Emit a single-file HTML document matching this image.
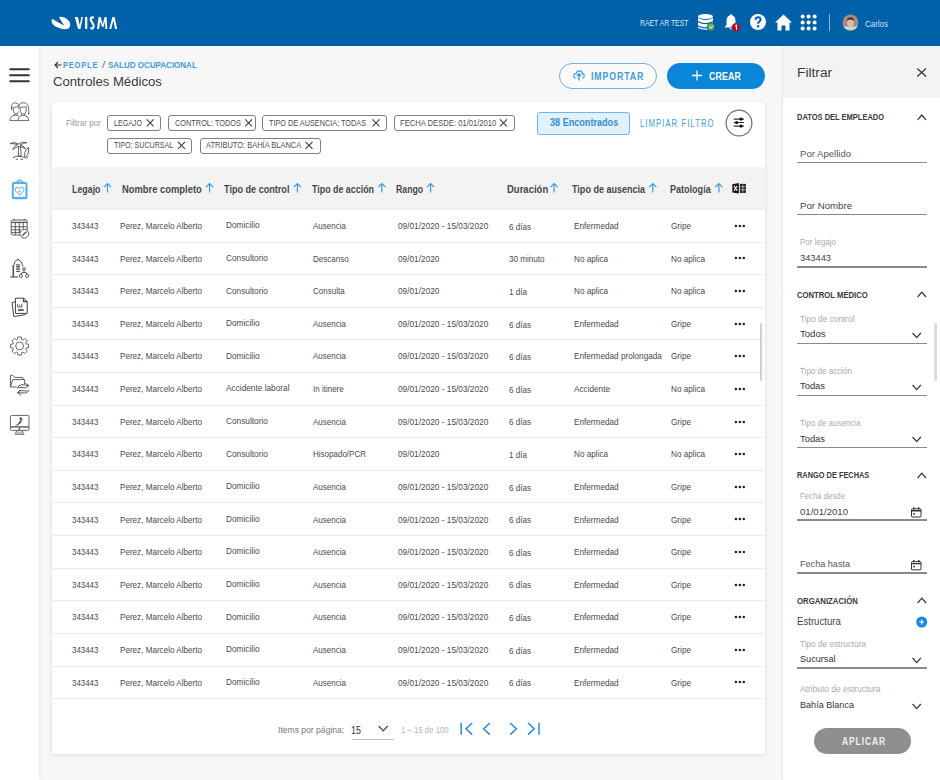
<!DOCTYPE html>
<html><head><meta charset="utf-8">
<style>
*{box-sizing:border-box;margin:0;padding:0}
html,body{width:940px;height:780px;overflow:hidden;background:#f7f7f7;font-family:"Liberation Sans",sans-serif;color:#333}
.abs{position:absolute;display:block}
.t{position:absolute;white-space:nowrap;transform-origin:0 0}
#hdr{position:absolute;left:0;top:0;width:940px;height:45.6px;background:#0061a9}
#side{position:absolute;left:0;top:45px;width:39px;height:735px;background:#fff;box-shadow:1px 0 4px rgba(0,0,0,.07)}
#card{position:absolute;left:52px;top:102px;width:713px;height:652px;background:#fff;border-radius:3px;box-shadow:0 1px 4px rgba(0,0,0,.11)}
#thead{position:absolute;left:52px;top:167px;width:713px;height:42px;background:#f3f3f3}
.rl{position:absolute;left:52px;width:713px;height:1px;background:#ececec}
#panel{position:absolute;left:783px;top:45px;width:157px;height:735px;background:#fff;box-shadow:-1px 0 2px rgba(0,0,0,.08)}
#phead{position:absolute;left:783px;top:45px;width:157px;height:53px;background:#f3f3f3}
.chip{position:absolute;height:16px;border:1px solid #808080;border-radius:3px;background:#fff}
.ul{position:absolute;left:797px;width:130px;height:1.5px;background:#8a8a8a}
</style></head>
<body>
<div id="side"></div>
<div id="card"></div>
<div id="thead"></div>
<div class="rl" style="top:208.88px"></div>
<div class="rl" style="top:241.50px"></div>
<div class="rl" style="top:274.12px"></div>
<div class="rl" style="top:306.74px"></div>
<div class="rl" style="top:339.36px"></div>
<div class="rl" style="top:371.98px"></div>
<div class="rl" style="top:404.60px"></div>
<div class="rl" style="top:437.22px"></div>
<div class="rl" style="top:469.84px"></div>
<div class="rl" style="top:502.46px"></div>
<div class="rl" style="top:535.08px"></div>
<div class="rl" style="top:567.70px"></div>
<div class="rl" style="top:600.32px"></div>
<div class="rl" style="top:632.94px"></div>
<div class="rl" style="top:665.56px"></div>
<div class="rl" style="top:698.18px"></div>
<div id="panel"></div>
<div id="phead"></div>
<div id="hdr"></div>

<!-- VISMA logo -->
<svg class="abs" style="left:48px;top:12px" width="75" height="22" viewBox="0 0 75 22">
  <g fill="#fff">
    <path d="M4.4 7.0 L16.2 13.8 L11.0 5.3 Q12 4.6 14.5 5.0 Q19.5 6.2 21.8 10.5 Q23 14.5 20.5 16.4 Q17.5 17.8 12.5 16.5 Q6.5 14.8 4.2 11.5 Q3.2 9.5 3.8 7.8 Q4 7 4.4 7.0 Z"/>
    <g transform="translate(24 0)">
      <polygon points="2.8,4.9 5.9,4.9 7.7,13.2 9.4,4.9 11,4.9 8.4,16.9 6.1,16.9"/>
      <rect x="13" y="4.9" width="2.3" height="12"/>
      <polygon points="25,16.9 26.6,4.9 28.7,4.9 30.7,12.3 32.7,4.9 34.6,4.9 35.3,16.9 33.3,16.9 33.1,9.2 31.4,15 30,15 28.3,9.2 27.1,16.9"/>
      <polygon points="37.3,16.9 40.4,4.9 42.6,4.9 45.2,16.9 43,16.9 41.4,8.4 39.2,16.9"/>
    </g>
  </g>
  <path transform="translate(24 0)" d="M21.9 5.8 Q18.9 4.6 18.7 7 Q18.6 8.6 20.2 10.6 Q21.9 12.7 21.7 14.5 Q21.4 17.1 18.4 16" stroke="#fff" stroke-width="2.1" fill="none"/>
</svg>

<!-- header icons -->
<svg class="abs" style="left:696px;top:13px" width="20" height="19" viewBox="0 0 20 19">
  <g fill="#fff">
    <ellipse cx="9.5" cy="3.5" rx="7.5" ry="2.5"/>
    <path d="M2 5 Q9.5 9 17 5 L17 8 Q9.5 12 2 8 Z"/>
    <path d="M2 9.2 Q9.5 13.2 17 9.2 L17 12.2 Q9.5 16.2 2 12.2 Z"/>
    <path d="M2 13.4 Q9.5 17.4 17 13.4 L17 15 Q9.5 18.5 2 15 Z"/>
  </g>
  <circle cx="15" cy="13.8" r="3.8" fill="#62b33a" stroke="#0061a9" stroke-width="0.8"/>
  <path d="M13.2 13.9 L14.6 15.2 L16.9 12.6" stroke="#fff" stroke-width="1" fill="none"/>
</svg>
<svg class="abs" style="left:722px;top:13px" width="20" height="19" viewBox="0 0 20 19">
  <path d="M8 2.2 Q8 1.2 9 1.2 Q10 1.2 10 2.2 Q13.5 3.3 13.5 8 L13.5 12 L15.5 14.5 L2.5 14.5 L4.5 12 L4.5 8 Q4.5 3.3 8 2.2 Z" fill="#fff"/>
  <path d="M7.3 15.3 Q9 17.8 10.7 15.3 Z" fill="#fff"/>
  <circle cx="14" cy="14.5" r="4.2" fill="#d0021b" stroke="#0061a9" stroke-width="0.6"/>
  <path d="M13.2 13 L14.5 12.2 L14.5 17" stroke="#fff" stroke-width="1.1" fill="none"/>
</svg>
<svg class="abs" style="left:749px;top:13px" width="18" height="18" viewBox="0 0 18 18">
  <circle cx="9" cy="9" r="8" fill="#fff"/>
  <path d="M6.5 6.8 Q6.5 4.2 9 4.2 Q11.6 4.2 11.6 6.6 Q11.6 8 10 8.9 Q9.1 9.5 9.1 10.8" stroke="#0061a9" stroke-width="2" fill="none"/>
  <circle cx="9.1" cy="13.2" r="1.2" fill="#0061a9"/>
</svg>
<svg class="abs" style="left:774px;top:13px" width="19" height="19" viewBox="0 0 19 19">
  <path d="M9.5 1.5 L18 9.5 L15.5 9.5 L15.5 17.5 L11.5 17.5 L11.5 12.5 L7.5 12.5 L7.5 17.5 L3.5 17.5 L3.5 9.5 L1 9.5 Z" fill="#fff"/>
</svg>
<svg class="abs" style="left:800px;top:14px" width="18" height="18" viewBox="0 0 18 18">
  <g fill="#fff">
    <circle cx="2.6" cy="2.6" r="2"/><circle cx="8.6" cy="2.6" r="2"/><circle cx="14.6" cy="2.6" r="2"/>
    <circle cx="2.6" cy="8.6" r="2"/><circle cx="8.6" cy="8.6" r="2"/><circle cx="14.6" cy="8.6" r="2"/>
    <circle cx="2.6" cy="14.6" r="2"/><circle cx="8.6" cy="14.6" r="2"/><circle cx="14.6" cy="14.6" r="2"/>
  </g>
</svg>
<div class="abs" style="left:829px;top:14px;width:1.2px;height:17px;background:#8fb6d8"></div>
<svg class="abs" style="left:842px;top:14px" width="17" height="17" viewBox="0 0 17 17">
  <defs><clipPath id="av"><circle cx="8.5" cy="8.5" r="8"/></clipPath></defs>
  <circle cx="8.5" cy="8.5" r="8" fill="#a08a86"/>
  <g clip-path="url(#av)">
    <rect x="0" y="12.5" width="17" height="6" fill="#d8d0cc"/>
    <ellipse cx="8.5" cy="8.5" rx="3.4" ry="4.4" fill="#dcb9a8"/>
    <path d="M5 7 Q5 3.2 8.5 3.4 Q12 3.2 12 7 Q10.5 5 8.5 5.5 Q6.5 5 5 7Z" fill="#3a2a25"/>
  </g>
</svg>

<!-- sidebar -->
<svg class="abs" style="left:9px;top:67px" width="21" height="16" viewBox="0 0 21 16">
  <g stroke="#333" stroke-width="2" stroke-linecap="round"><line x1="1.2" y1="2.2" x2="19.8" y2="2.2"/><line x1="1.2" y1="8.2" x2="19.8" y2="8.2"/><line x1="1.2" y1="14.2" x2="19.8" y2="14.2"/></g>
</svg>
<svg class="abs" style="left:6px;top:98px" width="28" height="28" viewBox="0 0 28 28">
  <g stroke="#666" stroke-width="0.95" fill="none" stroke-linejoin="round">
    <path d="M5.6 12 Q4.6 4.8 9 4.7 Q12.6 4.7 12.9 8.5"/>
    <path d="M6.2 10 Q9 8.8 12.4 8.6"/>
    <path d="M7.3 9.8 L7.3 13 Q8 16 10 16 Q11.8 16 12.4 13.5"/>
    <path d="M8.6 16 L8.6 17.4 M11.2 16 L11.2 17.4"/>
    <path d="M3.9 22.6 Q3.9 18.2 8 17.4 L11 17.2 Q12.2 17.5 12.7 18"/>
    <path d="M3.9 22.6 L23 22.6"/>
    <path d="M12.8 11 Q12.4 4.7 17.2 4.7 Q22.3 4.9 22.6 10.5 Q22.6 14 23 15.5"/>
    <path d="M13.5 9.8 Q17.3 8.5 20.7 9"/>
    <path d="M14.1 10 L14.1 13 Q15 16 17.2 16 Q19.5 16 20.2 13 L20.2 9.5"/>
    <path d="M15.5 16 L15.5 17.5 M18.8 16 L18.8 17.5"/>
    <path d="M12 22.6 Q12 18.6 15.3 17.6 L19 17.6 Q22.6 18.6 23 22.6"/>
  </g>
  <circle cx="22.6" cy="15.6" r="0.8" fill="#555"/>
</svg>
<svg class="abs" style="left:6px;top:136px" width="28" height="28" viewBox="0 0 28 28">
  <g stroke="#555" stroke-width="0.95" fill="none" stroke-linejoin="round">
    <path d="M4 7.6 Q8 5.4 12.6 8 Q16.2 5 21 6.6 Q17 7.2 14 9 Q17.2 9.6 19.6 12.6 Q16 11.2 13 10.2 Q10 11.2 6.6 13.6 Q8 10 11.6 8.6 Q8 7.4 4 7.6 Z"/>
    <path d="M12.6 10.2 Q12 15 12.6 20.3 L15 20.3 Q15.2 15 14.2 10.2"/>
    <path d="M22.5 11.5 Q19 13.2 18.6 19 Q18.6 21 19.6 21.6 Q22.6 19 22.8 14 Z"/>
    <path d="M7 21.8 Q10 19.6 13 20.2 Q16.5 20.6 19 21.6"/>
    <path d="M9.8 23.2 L12 23.2 M14.4 23 L17 23.6"/>
    <path d="M21.8 20.6 L20.8 22.6"/>
  </g>
</svg>
<svg class="abs" style="left:6px;top:176px" width="28" height="28" viewBox="0 0 28 28">
  <g stroke="#55aee9" fill="none" stroke-linejoin="round">
    <rect x="6.8" y="7.1" width="13.7" height="15.2" rx="1" stroke-width="2"/>
    <path d="M8.8 8 L8.8 6.6 Q10.2 6 11.6 5.6 Q12.4 4 13.6 4 Q14.8 4 15.6 5.6 Q17 6 18.4 6.6 L18.4 8" stroke-width="1.3"/>
    <path d="M6.8 21.3 L20.5 21.3" stroke-width="1"/>
    <path d="M13.6 19.2 L9.8 15.2 Q8.6 13.3 9.6 11.9 Q11.4 10.2 13.6 12.4 Q15.8 10.2 17.6 11.9 Q18.6 13.3 17.4 15.2 Z" stroke-width="1"/>
  </g>
  <circle cx="13.5" cy="15.4" r="1" fill="#55aee9"/>
</svg>
<svg class="abs" style="left:6px;top:214px" width="28" height="28" viewBox="0 0 28 28">
  <g stroke="#555" stroke-width="0.95" fill="none">
    <rect x="5.2" y="6" width="16" height="15" rx="1.3"/>
    <path d="M5.2 8.4 L21.2 8.4" stroke-width="1.3"/>
    <path d="M5.2 12.8 L21.2 12.8 M5.2 15.8 L15 15.8 M5.2 18.6 L13.5 18.6 M9.3 8.4 L9.3 21 M13.3 8.4 L13.3 19 M17.2 8.4 L17.2 15"/>
    <path d="M8.3 4.8 L8.3 6.5 M18.3 4.8 L18.3 6.5"/>
    <circle cx="18.3" cy="19.7" r="4.4" fill="#fff"/>
    <path d="M16.3 21.7 L20.3 17.7" stroke-width="1.5"/>
  </g>
</svg>
<svg class="abs" style="left:6px;top:254px" width="28" height="28" viewBox="0 0 28 28">
  <g stroke="#555" stroke-width="1" fill="none">
    <path d="M8.2 11 Q8 6.8 12 5.6 Q16 6.8 16.6 11.5"/>
    <path d="M12 5.6 L12 4.8" stroke-width="1.6"/>
    <path d="M7.3 11 L7.3 22.8" stroke-width="1.6"/>
    <path d="M4.4 23 L12 23" stroke-width="1.2"/>
    <path d="M10.2 10.7 L13.9 10.7 M10.2 12.4 L13.9 12.4 M10.2 14.1 L13.9 14.1 M10.2 15.8 L13.9 15.8 M10.2 17.5 L13.9 17.5" stroke-width="1.1"/>
    <path d="M16.6 11.5 L16.6 12.5" stroke-width="1.5"/>
    <circle cx="18" cy="15" r="1.3"/>
    <path d="M18 16.3 L18 18 M15 20.5 L16 18.6 L20.2 18.6 L21 20.5"/>
    <circle cx="14.8" cy="21.8" r="1.6"/><circle cx="21.2" cy="21.8" r="1.6"/>
  </g>
</svg>
<svg class="abs" style="left:6px;top:293px" width="28" height="28" viewBox="0 0 28 28">
  <g stroke="#444" stroke-width="1" fill="none" stroke-linejoin="round">
    <path d="M9 8.8 L6 9.6 L7.8 23.6 L19.6 21.6"/>
    <path d="M9.4 5.2 L17.6 5.2 L21.2 8.6 L21.2 20.4 L9.4 20.4 Z"/>
    <path d="M17.6 5.2 L17.6 8.6 L21.2 8.6" stroke-width="1.4"/>
  </g>
  <path d="M11.6 10.8 L11.6 14 L16.6 14 M13.8 11.6 L13.8 13.4 M15.8 10.8 L15.8 13.4" stroke="#555" stroke-width="0.9" fill="none"/>
  <path d="M12 16.2 L17.4 16.2 L18 17.8 L12 17.8 Z" fill="#333"/>
</svg>
<svg class="abs" style="left:6px;top:332px" width="28" height="28" viewBox="0 0 28 28">
  <path d="M11.58 7.40 L11.84 4.97 L15.36 4.97 L15.62 7.40 L16.84 7.91 L18.74 6.37 L21.23 8.86 L19.69 10.76 L20.20 11.98 L22.63 12.24 L22.63 15.76 L20.20 16.02 L19.69 17.24 L21.23 19.14 L18.74 21.63 L16.84 20.09 L15.62 20.60 L15.36 23.03 L11.84 23.03 L11.58 20.60 L10.36 20.09 L8.46 21.63 L5.97 19.14 L7.51 17.24 L7.00 16.02 L4.57 15.76 L4.57 12.24 L7.00 11.98 L7.51 10.76 L5.97 8.86 L8.46 6.37 L10.36 7.91 Z" stroke="#666" stroke-width="1" fill="none" stroke-linejoin="round"/>
  <circle cx="13.6" cy="14" r="3.9" stroke="#666" stroke-width="1" fill="none"/>
</svg>
<svg class="abs" style="left:6px;top:371px" width="28" height="28" viewBox="0 0 28 28">
  <g stroke="#555" stroke-width="0.95" fill="none" stroke-linejoin="round">
    <path d="M4.4 16 L4.4 5 Q4.4 4.3 5.2 4.3 L6.8 4.3 L8.6 6.4 L16.4 6.4 L17.6 8.6"/>
    <path d="M4.4 16 L6.8 8.6 L18.6 8.6 L18.6 13.2"/>
    <path d="M4.4 16 L10.8 16"/>
    <path d="M11.4 17.8 Q12 13.8 16 13.6 L22.8 14.6 M19.4 12.4 L23 14.6 L19.6 17"/>
    <path d="M22.6 18.6 Q22.6 21.8 18.4 22 L11.4 21.6 M14.8 19.4 L11.4 21.6 L15.2 24"/>
    <path d="M12.4 16.4 L19.6 16.8 M13.2 19.6 L21.4 20"/>
  </g>
</svg>
<svg class="abs" style="left:6px;top:410px" width="28" height="28" viewBox="0 0 28 28">
  <g stroke="#666" stroke-width="1" fill="none" stroke-linejoin="round">
    <rect x="4.4" y="5.4" width="18.6" height="15" rx="1.2"/>
    <path d="M4.4 16.9 L23 16.9" stroke-width="1.5"/>
    <path d="M13.4 17.5 L13.4 20.4" stroke-width="1.4"/>
    <path d="M11 20.6 L9.4 24.2 L17.8 24.2 L16 20.6" stroke-width="1.2"/>
  </g>
  <path d="M9.3 15.4 Q12 14.5 13.6 11.6 Q14.6 9.8 14.2 9 L12.6 9.4 L14.6 7 L17.4 9.4 L15.6 9.4 Q16 11.6 14.4 13.6 Q12.6 15.6 9.6 16 Z" fill="#555"/>
  <path d="M9.4 24 L17.8 24 L16.6 21.6 L10.6 21.6 Z" fill="#bbb"/>
</svg>

<!-- breadcrumb arrow -->
<svg class="abs" style="left:54px;top:61px" width="8" height="8" viewBox="0 0 8 8">
  <path d="M7.5 4 L1 4 M4 1 L1 4 L4 7" stroke="#333" stroke-width="1.1" fill="none"/>
</svg>

<!-- buttons -->
<div class="abs" style="left:559px;top:62.5px;width:98px;height:26px;border:1px solid #6ab4ea;border-radius:13px;background:#fafafa"></div>
<svg class="abs" style="left:573px;top:70px" width="12" height="11" viewBox="0 0 12 11">
  <path d="M3.5 8 Q0.5 8 0.8 5.2 Q1.2 3.2 3.2 3.3 Q4 0.6 6.5 0.8 Q9.3 1 9.4 3.6 Q11.5 3.8 11.2 6.2 Q11 8 9 8" stroke="#3d9be0" stroke-width="1.2" fill="none"/>
  <path d="M6 10.5 L6 4 M3.8 6 L6 3.8 L8.2 6" stroke="#3d9be0" stroke-width="1.4" fill="none"/>
</svg>
<div class="abs" style="left:667px;top:62.5px;width:98px;height:26px;border-radius:13px;background:#0a86d8"></div>
<svg class="abs" style="left:691px;top:69.5px" width="12" height="11" viewBox="0 0 12 11">
  <path d="M6 0.5 L6 10.5 M1 5.5 L11 5.5" stroke="#fff" stroke-width="1.3"/>
</svg>

<!-- encontrados / filter -->
<div class="abs" style="left:537px;top:111.5px;width:93px;height:23px;border:1px solid #6cb8ee;border-radius:3px;background:#e1f2fd"></div>
<svg class="abs" style="left:725px;top:109px" width="28" height="28" viewBox="0 0 28 28">
  <circle cx="14" cy="14" r="12.9" stroke="#707070" stroke-width="1.2" fill="#fff"/>
  <g stroke="#333" stroke-width="1.1"><path d="M8.7 10.1 L19 10.1 M8.7 13.5 L19 13.5 M8.7 17.1 L19 17.1"/></g>
  <g fill="#111"><circle cx="16" cy="10.1" r="1.6"/><circle cx="11.6" cy="13.5" r="1.6"/><circle cx="16" cy="17.1" r="1.6"/></g>
</svg>

<!-- chips -->
<div class="chip" style="left:107px;top:115px;width:54px"></div>
<div class="chip" style="left:168px;top:115px;width:88px"></div>
<div class="chip" style="left:262px;top:115px;width:125px"></div>
<div class="chip" style="left:394px;top:115px;width:121px"></div>
<div class="chip" style="left:107px;top:138px;width:85px"></div>
<div class="chip" style="left:200px;top:138px;width:121px"></div>
<svg class="abs" style="left:0;top:0" width="940" height="160" viewBox="0 0 940 160">
  <g stroke="#3a3a3a" stroke-width="1.05" fill="none">
    <path d="M146.8 119.3 L153.6 126.4 M153.6 119.3 L146.8 126.4"/>
    <path d="M245.2 119.3 L252 126.4 M252 119.3 L245.2 126.4"/>
    <path d="M372.5 119.3 L379.5 126.4 M379.5 119.3 L372.5 126.4"/>
    <path d="M500 119.3 L507 126.4 M507 119.3 L500 126.4"/>
    <path d="M178 141.8 L185 148.8 M185 141.8 L178 148.8"/>
    <path d="M305.5 141.8 L312.5 148.8 M312.5 141.8 L305.5 148.8"/>
  </g>
</svg>

<!-- sort arrows -->
<svg class="abs" style="left:0;top:170px" width="760" height="30" viewBox="0 170 760 30">
  <g stroke="#3d9be0" stroke-width="1.2" fill="none">
    <path d="M107.5 192.6 L107.5 183.6 M103.9 187.2 L107.5 183.6 L111.1 187.2"/>
    <path d="M209.6 192.6 L209.6 183.6 M206.0 187.2 L209.6 183.6 L213.2 187.2"/>
    <path d="M297.4 192.6 L297.4 183.6 M293.8 187.2 L297.4 183.6 L301.0 187.2"/>
    <path d="M381.8 192.6 L381.8 183.6 M378.2 187.2 L381.8 183.6 L385.4 187.2"/>
    <path d="M430.6 192.6 L430.6 183.6 M427.0 187.2 L430.6 183.6 L434.2 187.2"/>
    <path d="M554.1 192.6 L554.1 183.6 M550.5 187.2 L554.1 183.6 L557.7 187.2"/>
    <path d="M652.8 192.6 L652.8 183.6 M649.2 187.2 L652.8 183.6 L656.4 187.2"/>
    <path d="M718.9 192.6 L718.9 183.6 M715.3 187.2 L718.9 183.6 L722.5 187.2"/>
  </g>
  <g>
    <path d="M732.3 184.2 L738.9 182.9 L738.9 193.6 L732.3 192.6 Z" fill="#1a1a1a"/>
    <path d="M734 186 L737.2 190.6 M737.2 186 L734 190.6" stroke="#fff" stroke-width="1.1"/>
    <rect x="739.9" y="183.9" width="5.9" height="9" fill="#1a1a1a"/>
    <path d="M742.85 184.5 L742.85 192.3 M740.3 186.8 L745.4 186.8 M740.3 189.8 L745.4 189.8" stroke="#eee" stroke-width="0.7"/>
  </g>
</svg>
<svg class="abs" style="left:734px;top:223.79px" width="12" height="4" viewBox="0 0 12 4"><circle cx="1.9" cy="2" r="1.3" fill="#222"/><circle cx="5.85" cy="2" r="1.3" fill="#222"/><circle cx="9.8" cy="2" r="1.3" fill="#222"/></svg>
<svg class="abs" style="left:734px;top:256.41px" width="12" height="4" viewBox="0 0 12 4"><circle cx="1.9" cy="2" r="1.3" fill="#222"/><circle cx="5.85" cy="2" r="1.3" fill="#222"/><circle cx="9.8" cy="2" r="1.3" fill="#222"/></svg>
<svg class="abs" style="left:734px;top:289.03px" width="12" height="4" viewBox="0 0 12 4"><circle cx="1.9" cy="2" r="1.3" fill="#222"/><circle cx="5.85" cy="2" r="1.3" fill="#222"/><circle cx="9.8" cy="2" r="1.3" fill="#222"/></svg>
<svg class="abs" style="left:734px;top:321.65px" width="12" height="4" viewBox="0 0 12 4"><circle cx="1.9" cy="2" r="1.3" fill="#222"/><circle cx="5.85" cy="2" r="1.3" fill="#222"/><circle cx="9.8" cy="2" r="1.3" fill="#222"/></svg>
<svg class="abs" style="left:734px;top:354.27px" width="12" height="4" viewBox="0 0 12 4"><circle cx="1.9" cy="2" r="1.3" fill="#222"/><circle cx="5.85" cy="2" r="1.3" fill="#222"/><circle cx="9.8" cy="2" r="1.3" fill="#222"/></svg>
<svg class="abs" style="left:734px;top:386.89px" width="12" height="4" viewBox="0 0 12 4"><circle cx="1.9" cy="2" r="1.3" fill="#222"/><circle cx="5.85" cy="2" r="1.3" fill="#222"/><circle cx="9.8" cy="2" r="1.3" fill="#222"/></svg>
<svg class="abs" style="left:734px;top:419.51px" width="12" height="4" viewBox="0 0 12 4"><circle cx="1.9" cy="2" r="1.3" fill="#222"/><circle cx="5.85" cy="2" r="1.3" fill="#222"/><circle cx="9.8" cy="2" r="1.3" fill="#222"/></svg>
<svg class="abs" style="left:734px;top:452.13px" width="12" height="4" viewBox="0 0 12 4"><circle cx="1.9" cy="2" r="1.3" fill="#222"/><circle cx="5.85" cy="2" r="1.3" fill="#222"/><circle cx="9.8" cy="2" r="1.3" fill="#222"/></svg>
<svg class="abs" style="left:734px;top:484.75px" width="12" height="4" viewBox="0 0 12 4"><circle cx="1.9" cy="2" r="1.3" fill="#222"/><circle cx="5.85" cy="2" r="1.3" fill="#222"/><circle cx="9.8" cy="2" r="1.3" fill="#222"/></svg>
<svg class="abs" style="left:734px;top:517.37px" width="12" height="4" viewBox="0 0 12 4"><circle cx="1.9" cy="2" r="1.3" fill="#222"/><circle cx="5.85" cy="2" r="1.3" fill="#222"/><circle cx="9.8" cy="2" r="1.3" fill="#222"/></svg>
<svg class="abs" style="left:734px;top:549.99px" width="12" height="4" viewBox="0 0 12 4"><circle cx="1.9" cy="2" r="1.3" fill="#222"/><circle cx="5.85" cy="2" r="1.3" fill="#222"/><circle cx="9.8" cy="2" r="1.3" fill="#222"/></svg>
<svg class="abs" style="left:734px;top:582.61px" width="12" height="4" viewBox="0 0 12 4"><circle cx="1.9" cy="2" r="1.3" fill="#222"/><circle cx="5.85" cy="2" r="1.3" fill="#222"/><circle cx="9.8" cy="2" r="1.3" fill="#222"/></svg>
<svg class="abs" style="left:734px;top:615.23px" width="12" height="4" viewBox="0 0 12 4"><circle cx="1.9" cy="2" r="1.3" fill="#222"/><circle cx="5.85" cy="2" r="1.3" fill="#222"/><circle cx="9.8" cy="2" r="1.3" fill="#222"/></svg>
<svg class="abs" style="left:734px;top:647.85px" width="12" height="4" viewBox="0 0 12 4"><circle cx="1.9" cy="2" r="1.3" fill="#222"/><circle cx="5.85" cy="2" r="1.3" fill="#222"/><circle cx="9.8" cy="2" r="1.3" fill="#222"/></svg>
<svg class="abs" style="left:734px;top:680.47px" width="12" height="4" viewBox="0 0 12 4"><circle cx="1.9" cy="2" r="1.3" fill="#222"/><circle cx="5.85" cy="2" r="1.3" fill="#222"/><circle cx="9.8" cy="2" r="1.3" fill="#222"/></svg>

<!-- table scrollbar -->
<div class="abs" style="left:760.3px;top:323px;width:2px;height:58px;background:#d0d0d0;border-radius:1px"></div>

<!-- pagination -->
<div class="abs" style="left:352px;top:739px;width:41.5px;height:1px;background:#bdbdbd"></div>
<svg class="abs" style="left:0;top:715px" width="560" height="30" viewBox="0 715 560 30">
  <path d="M378.7 726 L383.2 730.8 L387.7 726" stroke="#444" stroke-width="1.2" fill="none"/>
  <g stroke="#2a8ad6" stroke-width="1.5" fill="none">
    <path d="M461.2 722.8 L461.2 734.8 M472.2 723 L466 728.8 L472.2 734.6"/>
    <path d="M489.8 723 L483.6 728.8 L489.8 734.6"/>
    <path d="M510.2 723 L516.4 728.8 L510.2 734.6"/>
    <path d="M528 723 L534.2 728.8 L528 734.6 M539 722.8 L539 734.8"/>
  </g>
</svg>

<!-- right panel icons -->
<svg class="abs" style="left:0;top:0" width="940" height="780" viewBox="0 0 940 780" style="pointer-events:none">
  <g stroke="#333" stroke-width="1.2" fill="none">
    <path d="M917.3 68.5 L926.1 76.5 M926.1 68.5 L917.3 76.5"/>
    <path d="M917.6 119.8 L921.8 115 L926 119.8"/>
    <path d="M917.6 297 L921.8 292.2 L926 297"/>
    <path d="M917.6 478 L921.8 473.2 L926 478"/>
    <path d="M917.6 603 L921.8 598.2 L926 603"/>
    <path d="M912.6 333 L916.7 337.6 L920.8 333"/>
    <path d="M912.6 385 L916.7 389.6 L920.8 385"/>
    <path d="M912.6 437 L916.7 441.6 L920.8 437"/>
    <path d="M912.6 658 L916.7 662.6 L920.8 658"/>
    <path d="M912.6 704 L916.7 708.6 L920.8 704"/>
  </g>
  <g stroke="#333" stroke-width="1" fill="none">
    <rect x="911.5" y="508.8" width="9.5" height="8.2" rx="0.8"/>
    <path d="M911.5 510.8 L921 510.8 M913.8 507.2 L913.8 509.5 M918.7 507.2 L918.7 509.5" stroke-width="1.4"/>
    <rect x="911.5" y="561.6" width="9.5" height="8.2" rx="0.8"/>
    <path d="M911.5 563.6 L921 563.6 M913.8 560 L913.8 562.3 M918.7 560 L918.7 562.3" stroke-width="1.4"/>
  </g>
  <rect x="913.3" y="513" width="1.6" height="1.6" fill="#333"/>
  <rect x="913.3" y="565.8" width="1.6" height="1.6" fill="#333"/>
  <circle cx="921.7" cy="622" r="5.5" fill="#1a8ae0"/>
  <path d="M921.7 619.6 L921.7 624.4 M919.3 622 L924.1 622" stroke="#fff" stroke-width="1.2"/>
</svg>
<div class="ul" style="top:161.6px"></div>
<div class="ul" style="top:213.9px"></div>
<div class="ul" style="top:266.3px"></div>
<div class="ul" style="top:342.6px"></div>
<div class="ul" style="top:394.7px"></div>
<div class="ul" style="top:446.6px"></div>
<div class="ul" style="top:519px"></div>
<div class="ul" style="top:572.4px"></div>
<div class="ul" style="top:667.4px"></div>
<div class="abs" style="left:934px;top:323.4px;width:2.5px;height:58px;background:#dcdcdc;border-radius:1px"></div>
<div class="abs" style="left:813.7px;top:728.2px;width:97.7px;height:25.5px;border-radius:13px;background:#8f8f8f"></div>

<div class="t" style="left:639.5px;top:18.95px;font-size:9.16px;line-height:9.16px;font-weight:400;color:#dbe7f2;transform:scaleX(0.747)">RAET AR TEST</div>
<div class="t" style="left:865.0px;top:18.86px;font-size:9.74px;line-height:9.74px;font-weight:400;color:#d2e2f0;transform:scaleX(0.814)">Carlos</div>
<div class="t" style="left:63.3px;top:60.92px;font-size:8.72px;line-height:8.72px;font-weight:700;color:#3d9be0;letter-spacing:1.02px;transform:scaleX(0.850)">PEOPLE</div>
<div class="t" style="left:101.6px;top:60.92px;font-size:8.72px;line-height:8.72px;font-weight:400;color:#777;transform:scaleX(1.395)">/</div>
<div class="t" style="left:107.9px;top:60.92px;font-size:8.72px;line-height:8.72px;font-weight:700;color:#3d9be0;transform:scaleX(0.918)">SALUD OCUPACIONAL</div>
<div class="t" style="left:52.6px;top:75.18px;font-size:13.37px;line-height:13.37px;font-weight:400;color:#3a3a3a;transform:scaleX(0.984)">Controles Médicos</div>
<div class="t" style="left:591.1px;top:71.61px;font-size:10.03px;line-height:10.03px;font-weight:700;color:#3d9be0;letter-spacing:0.98px;transform:scaleX(0.880)">IMPORTAR</div>
<div class="t" style="left:709.2px;top:71.61px;font-size:10.03px;line-height:10.03px;font-weight:700;color:#ffffff;letter-spacing:0.13px;transform:scaleX(0.880)">CREAR</div>
<div class="t" style="left:549.9px;top:118.09px;font-size:10.17px;line-height:10.17px;font-weight:700;color:#2f8fd6;transform:scaleX(0.895)">38 Encontrados</div>
<div class="t" style="left:639.8px;top:118.85px;font-size:10.1px;line-height:10.1px;font-weight:400;color:#3d9be0;letter-spacing:1.41px;transform:scaleX(0.760)">LIMPIAR FILTRO</div>
<div class="t" style="left:65.7px;top:118.96px;font-size:8.43px;line-height:8.43px;font-weight:400;color:#9a9a9a;transform:scaleX(0.974)">Filtrar por</div>
<div class="t" style="left:114.2px;top:118.95px;font-size:9.16px;line-height:9.16px;font-weight:400;color:#4e4e4e;transform:scaleX(0.772)">LEGAJO</div>
<div class="t" style="left:174.5px;top:118.95px;font-size:9.16px;line-height:9.16px;font-weight:400;color:#4e4e4e;transform:scaleX(0.803)">CONTROL: TODOS</div>
<div class="t" style="left:269.4px;top:118.95px;font-size:9.16px;line-height:9.16px;font-weight:400;color:#4e4e4e;transform:scaleX(0.797)">TIPO DE AUSENCIA: TODAS</div>
<div class="t" style="left:400.1px;top:118.95px;font-size:9.16px;line-height:9.16px;font-weight:400;color:#4e4e4e;transform:scaleX(0.834)">FECHA DESDE: 01/01/2010</div>
<div class="t" style="left:114.2px;top:141.35px;font-size:9.16px;line-height:9.16px;font-weight:400;color:#4e4e4e;transform:scaleX(0.776)">TIPO: SUCURSAL</div>
<div class="t" style="left:205.8px;top:141.35px;font-size:9.16px;line-height:9.16px;font-weight:400;color:#4e4e4e;transform:scaleX(0.816)">ATRIBUTO: BAHÍA BLANCA</div>
<div class="t" style="left:72.0px;top:184.69px;font-size:10.17px;line-height:10.17px;font-weight:700;color:#484848;transform:scaleX(0.871)">Legajo</div>
<div class="t" style="left:122.3px;top:184.69px;font-size:10.17px;line-height:10.17px;font-weight:700;color:#484848;transform:scaleX(0.924)">Nombre completo</div>
<div class="t" style="left:224.0px;top:184.69px;font-size:10.17px;line-height:10.17px;font-weight:700;color:#484848;transform:scaleX(0.894)">Tipo de control</div>
<div class="t" style="left:311.8px;top:184.69px;font-size:10.17px;line-height:10.17px;font-weight:700;color:#484848;transform:scaleX(0.874)">Tipo de acción</div>
<div class="t" style="left:395.9px;top:184.69px;font-size:10.17px;line-height:10.17px;font-weight:700;color:#484848;transform:scaleX(0.857)">Rango</div>
<div class="t" style="left:506.8px;top:184.69px;font-size:10.17px;line-height:10.17px;font-weight:700;color:#484848;transform:scaleX(0.936)">Duración</div>
<div class="t" style="left:571.9px;top:184.69px;font-size:10.17px;line-height:10.17px;font-weight:700;color:#484848;transform:scaleX(0.889)">Tipo de ausencia</div>
<div class="t" style="left:670.3px;top:184.69px;font-size:10.17px;line-height:10.17px;font-weight:700;color:#484848;transform:scaleX(0.890)">Patología</div>
<div class="t" style="left:72.0px;top:221.96px;font-size:9.01px;line-height:9.01px;font-weight:400;color:#4a4a4a;transform:scaleX(0.880)">343443</div>
<div class="t" style="left:119.7px;top:221.96px;font-size:9.01px;line-height:9.01px;font-weight:400;color:#4a4a4a;transform:scaleX(0.900)">Perez, Marcelo Alberto</div>
<div class="t" style="left:225.5px;top:221.26px;font-size:9.01px;line-height:9.01px;font-weight:400;color:#4a4a4a;transform:scaleX(0.920)">Domicilio</div>
<div class="t" style="left:312.6px;top:221.96px;font-size:9.01px;line-height:9.01px;font-weight:400;color:#4a4a4a;transform:scaleX(0.890)">Ausencia</div>
<div class="t" style="left:397.7px;top:221.96px;font-size:9.01px;line-height:9.01px;font-weight:400;color:#4a4a4a;transform:scaleX(0.920)">09/01/2020 - 15/03/2020</div>
<div class="t" style="left:508.6px;top:222.66px;font-size:9.01px;line-height:9.01px;font-weight:400;color:#4a4a4a;transform:scaleX(0.900)">6 días</div>
<div class="t" style="left:574.0px;top:221.96px;font-size:9.01px;line-height:9.01px;font-weight:400;color:#4a4a4a;transform:scaleX(0.910)">Enfermedad</div>
<div class="t" style="left:671.0px;top:221.96px;font-size:9.01px;line-height:9.01px;font-weight:400;color:#4a4a4a;transform:scaleX(0.910)">Gripe</div>
<div class="t" style="left:72.0px;top:254.58px;font-size:9.01px;line-height:9.01px;font-weight:400;color:#4a4a4a;transform:scaleX(0.880)">343443</div>
<div class="t" style="left:119.7px;top:254.58px;font-size:9.01px;line-height:9.01px;font-weight:400;color:#4a4a4a;transform:scaleX(0.900)">Perez, Marcelo Alberto</div>
<div class="t" style="left:225.5px;top:253.88px;font-size:9.01px;line-height:9.01px;font-weight:400;color:#4a4a4a;transform:scaleX(0.920)">Consultorio</div>
<div class="t" style="left:312.6px;top:254.58px;font-size:9.01px;line-height:9.01px;font-weight:400;color:#4a4a4a;transform:scaleX(0.890)">Descanso</div>
<div class="t" style="left:397.7px;top:254.58px;font-size:9.01px;line-height:9.01px;font-weight:400;color:#4a4a4a;transform:scaleX(0.920)">09/01/2020</div>
<div class="t" style="left:508.6px;top:255.28px;font-size:9.01px;line-height:9.01px;font-weight:400;color:#4a4a4a;transform:scaleX(0.900)">30 minuto</div>
<div class="t" style="left:574.0px;top:254.58px;font-size:9.01px;line-height:9.01px;font-weight:400;color:#4a4a4a;transform:scaleX(0.910)">No aplica</div>
<div class="t" style="left:671.0px;top:254.58px;font-size:9.01px;line-height:9.01px;font-weight:400;color:#4a4a4a;transform:scaleX(0.910)">No aplica</div>
<div class="t" style="left:72.0px;top:287.20px;font-size:9.01px;line-height:9.01px;font-weight:400;color:#4a4a4a;transform:scaleX(0.880)">343443</div>
<div class="t" style="left:119.7px;top:287.20px;font-size:9.01px;line-height:9.01px;font-weight:400;color:#4a4a4a;transform:scaleX(0.900)">Perez, Marcelo Alberto</div>
<div class="t" style="left:225.5px;top:286.50px;font-size:9.01px;line-height:9.01px;font-weight:400;color:#4a4a4a;transform:scaleX(0.920)">Consultorio</div>
<div class="t" style="left:312.6px;top:287.20px;font-size:9.01px;line-height:9.01px;font-weight:400;color:#4a4a4a;transform:scaleX(0.890)">Consulta</div>
<div class="t" style="left:397.7px;top:287.20px;font-size:9.01px;line-height:9.01px;font-weight:400;color:#4a4a4a;transform:scaleX(0.920)">09/01/2020</div>
<div class="t" style="left:508.6px;top:287.90px;font-size:9.01px;line-height:9.01px;font-weight:400;color:#4a4a4a;transform:scaleX(0.900)">1 día</div>
<div class="t" style="left:574.0px;top:287.20px;font-size:9.01px;line-height:9.01px;font-weight:400;color:#4a4a4a;transform:scaleX(0.910)">No aplica</div>
<div class="t" style="left:671.0px;top:287.20px;font-size:9.01px;line-height:9.01px;font-weight:400;color:#4a4a4a;transform:scaleX(0.910)">No aplica</div>
<div class="t" style="left:72.0px;top:319.82px;font-size:9.01px;line-height:9.01px;font-weight:400;color:#4a4a4a;transform:scaleX(0.880)">343443</div>
<div class="t" style="left:119.7px;top:319.82px;font-size:9.01px;line-height:9.01px;font-weight:400;color:#4a4a4a;transform:scaleX(0.900)">Perez, Marcelo Alberto</div>
<div class="t" style="left:225.5px;top:319.12px;font-size:9.01px;line-height:9.01px;font-weight:400;color:#4a4a4a;transform:scaleX(0.920)">Domicilio</div>
<div class="t" style="left:312.6px;top:319.82px;font-size:9.01px;line-height:9.01px;font-weight:400;color:#4a4a4a;transform:scaleX(0.890)">Ausencia</div>
<div class="t" style="left:397.7px;top:319.82px;font-size:9.01px;line-height:9.01px;font-weight:400;color:#4a4a4a;transform:scaleX(0.920)">09/01/2020 - 15/03/2020</div>
<div class="t" style="left:508.6px;top:320.52px;font-size:9.01px;line-height:9.01px;font-weight:400;color:#4a4a4a;transform:scaleX(0.900)">6 días</div>
<div class="t" style="left:574.0px;top:319.82px;font-size:9.01px;line-height:9.01px;font-weight:400;color:#4a4a4a;transform:scaleX(0.910)">Enfermedad</div>
<div class="t" style="left:671.0px;top:319.82px;font-size:9.01px;line-height:9.01px;font-weight:400;color:#4a4a4a;transform:scaleX(0.910)">Gripe</div>
<div class="t" style="left:72.0px;top:352.44px;font-size:9.01px;line-height:9.01px;font-weight:400;color:#4a4a4a;transform:scaleX(0.880)">343443</div>
<div class="t" style="left:119.7px;top:352.44px;font-size:9.01px;line-height:9.01px;font-weight:400;color:#4a4a4a;transform:scaleX(0.900)">Perez, Marcelo Alberto</div>
<div class="t" style="left:225.5px;top:351.74px;font-size:9.01px;line-height:9.01px;font-weight:400;color:#4a4a4a;transform:scaleX(0.920)">Domicilio</div>
<div class="t" style="left:312.6px;top:352.44px;font-size:9.01px;line-height:9.01px;font-weight:400;color:#4a4a4a;transform:scaleX(0.890)">Ausencia</div>
<div class="t" style="left:397.7px;top:352.44px;font-size:9.01px;line-height:9.01px;font-weight:400;color:#4a4a4a;transform:scaleX(0.920)">09/01/2020 - 15/03/2020</div>
<div class="t" style="left:508.6px;top:353.14px;font-size:9.01px;line-height:9.01px;font-weight:400;color:#4a4a4a;transform:scaleX(0.900)">6 días</div>
<div class="t" style="left:574.0px;top:352.44px;font-size:9.01px;line-height:9.01px;font-weight:400;color:#4a4a4a;transform:scaleX(0.910)">Enfermedad prolongada</div>
<div class="t" style="left:671.0px;top:352.44px;font-size:9.01px;line-height:9.01px;font-weight:400;color:#4a4a4a;transform:scaleX(0.910)">Gripe</div>
<div class="t" style="left:72.0px;top:385.06px;font-size:9.01px;line-height:9.01px;font-weight:400;color:#4a4a4a;transform:scaleX(0.880)">343443</div>
<div class="t" style="left:119.7px;top:385.06px;font-size:9.01px;line-height:9.01px;font-weight:400;color:#4a4a4a;transform:scaleX(0.900)">Perez, Marcelo Alberto</div>
<div class="t" style="left:225.5px;top:384.36px;font-size:9.01px;line-height:9.01px;font-weight:400;color:#4a4a4a;transform:scaleX(0.920)">Accidente laboral</div>
<div class="t" style="left:312.6px;top:385.06px;font-size:9.01px;line-height:9.01px;font-weight:400;color:#4a4a4a;transform:scaleX(0.890)">In itinere</div>
<div class="t" style="left:397.7px;top:385.06px;font-size:9.01px;line-height:9.01px;font-weight:400;color:#4a4a4a;transform:scaleX(0.920)">09/01/2020 - 15/03/2020</div>
<div class="t" style="left:508.6px;top:385.76px;font-size:9.01px;line-height:9.01px;font-weight:400;color:#4a4a4a;transform:scaleX(0.900)">6 días</div>
<div class="t" style="left:574.0px;top:385.06px;font-size:9.01px;line-height:9.01px;font-weight:400;color:#4a4a4a;transform:scaleX(0.910)">Accidente</div>
<div class="t" style="left:671.0px;top:385.06px;font-size:9.01px;line-height:9.01px;font-weight:400;color:#4a4a4a;transform:scaleX(0.910)">No aplica</div>
<div class="t" style="left:72.0px;top:417.68px;font-size:9.01px;line-height:9.01px;font-weight:400;color:#4a4a4a;transform:scaleX(0.880)">343443</div>
<div class="t" style="left:119.7px;top:417.68px;font-size:9.01px;line-height:9.01px;font-weight:400;color:#4a4a4a;transform:scaleX(0.900)">Perez, Marcelo Alberto</div>
<div class="t" style="left:225.5px;top:416.98px;font-size:9.01px;line-height:9.01px;font-weight:400;color:#4a4a4a;transform:scaleX(0.920)">Consultorio</div>
<div class="t" style="left:312.6px;top:417.68px;font-size:9.01px;line-height:9.01px;font-weight:400;color:#4a4a4a;transform:scaleX(0.890)">Ausencia</div>
<div class="t" style="left:397.7px;top:417.68px;font-size:9.01px;line-height:9.01px;font-weight:400;color:#4a4a4a;transform:scaleX(0.920)">09/01/2020 - 15/03/2020</div>
<div class="t" style="left:508.6px;top:418.38px;font-size:9.01px;line-height:9.01px;font-weight:400;color:#4a4a4a;transform:scaleX(0.900)">6 días</div>
<div class="t" style="left:574.0px;top:417.68px;font-size:9.01px;line-height:9.01px;font-weight:400;color:#4a4a4a;transform:scaleX(0.910)">Enfermedad</div>
<div class="t" style="left:671.0px;top:417.68px;font-size:9.01px;line-height:9.01px;font-weight:400;color:#4a4a4a;transform:scaleX(0.910)">Gripe</div>
<div class="t" style="left:72.0px;top:450.30px;font-size:9.01px;line-height:9.01px;font-weight:400;color:#4a4a4a;transform:scaleX(0.880)">343443</div>
<div class="t" style="left:119.7px;top:450.30px;font-size:9.01px;line-height:9.01px;font-weight:400;color:#4a4a4a;transform:scaleX(0.900)">Perez, Marcelo Alberto</div>
<div class="t" style="left:225.5px;top:449.60px;font-size:9.01px;line-height:9.01px;font-weight:400;color:#4a4a4a;transform:scaleX(0.920)">Consultorio</div>
<div class="t" style="left:312.6px;top:450.30px;font-size:9.01px;line-height:9.01px;font-weight:400;color:#4a4a4a;transform:scaleX(0.890)">Hisopado/PCR</div>
<div class="t" style="left:397.7px;top:450.30px;font-size:9.01px;line-height:9.01px;font-weight:400;color:#4a4a4a;transform:scaleX(0.920)">09/01/2020</div>
<div class="t" style="left:508.6px;top:451.00px;font-size:9.01px;line-height:9.01px;font-weight:400;color:#4a4a4a;transform:scaleX(0.900)">1 día</div>
<div class="t" style="left:574.0px;top:450.30px;font-size:9.01px;line-height:9.01px;font-weight:400;color:#4a4a4a;transform:scaleX(0.910)">No aplica</div>
<div class="t" style="left:671.0px;top:450.30px;font-size:9.01px;line-height:9.01px;font-weight:400;color:#4a4a4a;transform:scaleX(0.910)">No aplica</div>
<div class="t" style="left:72.0px;top:482.92px;font-size:9.01px;line-height:9.01px;font-weight:400;color:#4a4a4a;transform:scaleX(0.880)">343443</div>
<div class="t" style="left:119.7px;top:482.92px;font-size:9.01px;line-height:9.01px;font-weight:400;color:#4a4a4a;transform:scaleX(0.900)">Perez, Marcelo Alberto</div>
<div class="t" style="left:225.5px;top:482.22px;font-size:9.01px;line-height:9.01px;font-weight:400;color:#4a4a4a;transform:scaleX(0.920)">Domicilio</div>
<div class="t" style="left:312.6px;top:482.92px;font-size:9.01px;line-height:9.01px;font-weight:400;color:#4a4a4a;transform:scaleX(0.890)">Ausencia</div>
<div class="t" style="left:397.7px;top:482.92px;font-size:9.01px;line-height:9.01px;font-weight:400;color:#4a4a4a;transform:scaleX(0.920)">09/01/2020 - 15/03/2020</div>
<div class="t" style="left:508.6px;top:483.62px;font-size:9.01px;line-height:9.01px;font-weight:400;color:#4a4a4a;transform:scaleX(0.900)">6 días</div>
<div class="t" style="left:574.0px;top:482.92px;font-size:9.01px;line-height:9.01px;font-weight:400;color:#4a4a4a;transform:scaleX(0.910)">Enfermedad</div>
<div class="t" style="left:671.0px;top:482.92px;font-size:9.01px;line-height:9.01px;font-weight:400;color:#4a4a4a;transform:scaleX(0.910)">Gripe</div>
<div class="t" style="left:72.0px;top:515.54px;font-size:9.01px;line-height:9.01px;font-weight:400;color:#4a4a4a;transform:scaleX(0.880)">343443</div>
<div class="t" style="left:119.7px;top:515.54px;font-size:9.01px;line-height:9.01px;font-weight:400;color:#4a4a4a;transform:scaleX(0.900)">Perez, Marcelo Alberto</div>
<div class="t" style="left:225.5px;top:514.84px;font-size:9.01px;line-height:9.01px;font-weight:400;color:#4a4a4a;transform:scaleX(0.920)">Domicilio</div>
<div class="t" style="left:312.6px;top:515.54px;font-size:9.01px;line-height:9.01px;font-weight:400;color:#4a4a4a;transform:scaleX(0.890)">Ausencia</div>
<div class="t" style="left:397.7px;top:515.54px;font-size:9.01px;line-height:9.01px;font-weight:400;color:#4a4a4a;transform:scaleX(0.920)">09/01/2020 - 15/03/2020</div>
<div class="t" style="left:508.6px;top:516.24px;font-size:9.01px;line-height:9.01px;font-weight:400;color:#4a4a4a;transform:scaleX(0.900)">6 días</div>
<div class="t" style="left:574.0px;top:515.54px;font-size:9.01px;line-height:9.01px;font-weight:400;color:#4a4a4a;transform:scaleX(0.910)">Enfermedad</div>
<div class="t" style="left:671.0px;top:515.54px;font-size:9.01px;line-height:9.01px;font-weight:400;color:#4a4a4a;transform:scaleX(0.910)">Gripe</div>
<div class="t" style="left:72.0px;top:548.16px;font-size:9.01px;line-height:9.01px;font-weight:400;color:#4a4a4a;transform:scaleX(0.880)">343443</div>
<div class="t" style="left:119.7px;top:548.16px;font-size:9.01px;line-height:9.01px;font-weight:400;color:#4a4a4a;transform:scaleX(0.900)">Perez, Marcelo Alberto</div>
<div class="t" style="left:225.5px;top:547.46px;font-size:9.01px;line-height:9.01px;font-weight:400;color:#4a4a4a;transform:scaleX(0.920)">Domicilio</div>
<div class="t" style="left:312.6px;top:548.16px;font-size:9.01px;line-height:9.01px;font-weight:400;color:#4a4a4a;transform:scaleX(0.890)">Ausencia</div>
<div class="t" style="left:397.7px;top:548.16px;font-size:9.01px;line-height:9.01px;font-weight:400;color:#4a4a4a;transform:scaleX(0.920)">09/01/2020 - 15/03/2020</div>
<div class="t" style="left:508.6px;top:548.86px;font-size:9.01px;line-height:9.01px;font-weight:400;color:#4a4a4a;transform:scaleX(0.900)">6 días</div>
<div class="t" style="left:574.0px;top:548.16px;font-size:9.01px;line-height:9.01px;font-weight:400;color:#4a4a4a;transform:scaleX(0.910)">Enfermedad</div>
<div class="t" style="left:671.0px;top:548.16px;font-size:9.01px;line-height:9.01px;font-weight:400;color:#4a4a4a;transform:scaleX(0.910)">Gripe</div>
<div class="t" style="left:72.0px;top:580.78px;font-size:9.01px;line-height:9.01px;font-weight:400;color:#4a4a4a;transform:scaleX(0.880)">343443</div>
<div class="t" style="left:119.7px;top:580.78px;font-size:9.01px;line-height:9.01px;font-weight:400;color:#4a4a4a;transform:scaleX(0.900)">Perez, Marcelo Alberto</div>
<div class="t" style="left:225.5px;top:580.08px;font-size:9.01px;line-height:9.01px;font-weight:400;color:#4a4a4a;transform:scaleX(0.920)">Domicilio</div>
<div class="t" style="left:312.6px;top:580.78px;font-size:9.01px;line-height:9.01px;font-weight:400;color:#4a4a4a;transform:scaleX(0.890)">Ausencia</div>
<div class="t" style="left:397.7px;top:580.78px;font-size:9.01px;line-height:9.01px;font-weight:400;color:#4a4a4a;transform:scaleX(0.920)">09/01/2020 - 15/03/2020</div>
<div class="t" style="left:508.6px;top:581.48px;font-size:9.01px;line-height:9.01px;font-weight:400;color:#4a4a4a;transform:scaleX(0.900)">6 días</div>
<div class="t" style="left:574.0px;top:580.78px;font-size:9.01px;line-height:9.01px;font-weight:400;color:#4a4a4a;transform:scaleX(0.910)">Enfermedad</div>
<div class="t" style="left:671.0px;top:580.78px;font-size:9.01px;line-height:9.01px;font-weight:400;color:#4a4a4a;transform:scaleX(0.910)">Gripe</div>
<div class="t" style="left:72.0px;top:613.40px;font-size:9.01px;line-height:9.01px;font-weight:400;color:#4a4a4a;transform:scaleX(0.880)">343443</div>
<div class="t" style="left:119.7px;top:613.40px;font-size:9.01px;line-height:9.01px;font-weight:400;color:#4a4a4a;transform:scaleX(0.900)">Perez, Marcelo Alberto</div>
<div class="t" style="left:225.5px;top:612.70px;font-size:9.01px;line-height:9.01px;font-weight:400;color:#4a4a4a;transform:scaleX(0.920)">Domicilio</div>
<div class="t" style="left:312.6px;top:613.40px;font-size:9.01px;line-height:9.01px;font-weight:400;color:#4a4a4a;transform:scaleX(0.890)">Ausencia</div>
<div class="t" style="left:397.7px;top:613.40px;font-size:9.01px;line-height:9.01px;font-weight:400;color:#4a4a4a;transform:scaleX(0.920)">09/01/2020 - 15/03/2020</div>
<div class="t" style="left:508.6px;top:614.10px;font-size:9.01px;line-height:9.01px;font-weight:400;color:#4a4a4a;transform:scaleX(0.900)">6 días</div>
<div class="t" style="left:574.0px;top:613.40px;font-size:9.01px;line-height:9.01px;font-weight:400;color:#4a4a4a;transform:scaleX(0.910)">Enfermedad</div>
<div class="t" style="left:671.0px;top:613.40px;font-size:9.01px;line-height:9.01px;font-weight:400;color:#4a4a4a;transform:scaleX(0.910)">Gripe</div>
<div class="t" style="left:72.0px;top:646.02px;font-size:9.01px;line-height:9.01px;font-weight:400;color:#4a4a4a;transform:scaleX(0.880)">343443</div>
<div class="t" style="left:119.7px;top:646.02px;font-size:9.01px;line-height:9.01px;font-weight:400;color:#4a4a4a;transform:scaleX(0.900)">Perez, Marcelo Alberto</div>
<div class="t" style="left:225.5px;top:645.32px;font-size:9.01px;line-height:9.01px;font-weight:400;color:#4a4a4a;transform:scaleX(0.920)">Domicilio</div>
<div class="t" style="left:312.6px;top:646.02px;font-size:9.01px;line-height:9.01px;font-weight:400;color:#4a4a4a;transform:scaleX(0.890)">Ausencia</div>
<div class="t" style="left:397.7px;top:646.02px;font-size:9.01px;line-height:9.01px;font-weight:400;color:#4a4a4a;transform:scaleX(0.920)">09/01/2020 - 15/03/2020</div>
<div class="t" style="left:508.6px;top:646.72px;font-size:9.01px;line-height:9.01px;font-weight:400;color:#4a4a4a;transform:scaleX(0.900)">6 días</div>
<div class="t" style="left:574.0px;top:646.02px;font-size:9.01px;line-height:9.01px;font-weight:400;color:#4a4a4a;transform:scaleX(0.910)">Enfermedad</div>
<div class="t" style="left:671.0px;top:646.02px;font-size:9.01px;line-height:9.01px;font-weight:400;color:#4a4a4a;transform:scaleX(0.910)">Gripe</div>
<div class="t" style="left:72.0px;top:678.64px;font-size:9.01px;line-height:9.01px;font-weight:400;color:#4a4a4a;transform:scaleX(0.880)">343443</div>
<div class="t" style="left:119.7px;top:678.64px;font-size:9.01px;line-height:9.01px;font-weight:400;color:#4a4a4a;transform:scaleX(0.900)">Perez, Marcelo Alberto</div>
<div class="t" style="left:225.5px;top:677.94px;font-size:9.01px;line-height:9.01px;font-weight:400;color:#4a4a4a;transform:scaleX(0.920)">Domicilio</div>
<div class="t" style="left:312.6px;top:678.64px;font-size:9.01px;line-height:9.01px;font-weight:400;color:#4a4a4a;transform:scaleX(0.890)">Ausencia</div>
<div class="t" style="left:397.7px;top:678.64px;font-size:9.01px;line-height:9.01px;font-weight:400;color:#4a4a4a;transform:scaleX(0.920)">09/01/2020 - 15/03/2020</div>
<div class="t" style="left:508.6px;top:679.34px;font-size:9.01px;line-height:9.01px;font-weight:400;color:#4a4a4a;transform:scaleX(0.900)">6 días</div>
<div class="t" style="left:574.0px;top:678.64px;font-size:9.01px;line-height:9.01px;font-weight:400;color:#4a4a4a;transform:scaleX(0.910)">Enfermedad</div>
<div class="t" style="left:671.0px;top:678.64px;font-size:9.01px;line-height:9.01px;font-weight:400;color:#4a4a4a;transform:scaleX(0.910)">Gripe</div>
<div class="t" style="left:796.7px;top:66.26px;font-size:13.52px;line-height:13.52px;font-weight:400;color:#3a3a3a;transform:scaleX(1.019)">Filtrar</div>
<div class="t" style="left:796.7px;top:113.22px;font-size:8.72px;line-height:8.72px;font-weight:700;color:#3a3a3a;transform:scaleX(0.860)">DATOS DEL EMPLEADO</div>
<div class="t" style="left:796.7px;top:290.52px;font-size:8.72px;line-height:8.72px;font-weight:700;color:#3a3a3a;transform:scaleX(0.882)">CONTROL MÉDICO</div>
<div class="t" style="left:796.7px;top:471.42px;font-size:8.72px;line-height:8.72px;font-weight:700;color:#3a3a3a;transform:scaleX(0.848)">RANGO DE FECHAS</div>
<div class="t" style="left:796.7px;top:596.52px;font-size:8.72px;line-height:8.72px;font-weight:700;color:#3a3a3a;transform:scaleX(0.890)">ORGANIZACIÓN</div>
<div class="t" style="left:800.0px;top:148.54px;font-size:9.88px;line-height:9.88px;font-weight:400;color:#555;transform:scaleX(0.968)">Por Apellido</div>
<div class="t" style="left:800.0px;top:200.94px;font-size:9.88px;line-height:9.88px;font-weight:400;color:#444;transform:scaleX(0.977)">Por Nombre</div>
<div class="t" style="left:800.0px;top:238.26px;font-size:8.43px;line-height:8.43px;font-weight:400;color:#aaa;transform:scaleX(0.949)">Por legajo</div>
<div class="t" style="left:800.0px;top:253.08px;font-size:9.59px;line-height:9.59px;font-weight:400;color:#444;transform:scaleX(0.970)">343443</div>
<div class="t" style="left:800.0px;top:315.06px;font-size:8.43px;line-height:8.43px;font-weight:400;color:#aaa;transform:scaleX(0.984)">Tipo de control</div>
<div class="t" style="left:800.0px;top:329.14px;font-size:9.88px;line-height:9.88px;font-weight:400;color:#333;transform:scaleX(0.967)">Todos</div>
<div class="t" style="left:800.0px;top:366.96px;font-size:8.43px;line-height:8.43px;font-weight:400;color:#aaa;transform:scaleX(0.955)">Tipo de acción</div>
<div class="t" style="left:800.0px;top:381.44px;font-size:9.88px;line-height:9.88px;font-weight:400;color:#333;transform:scaleX(0.948)">Todas</div>
<div class="t" style="left:800.0px;top:419.26px;font-size:8.43px;line-height:8.43px;font-weight:400;color:#aaa;transform:scaleX(0.948)">Tipo de ausencia</div>
<div class="t" style="left:800.0px;top:433.84px;font-size:9.88px;line-height:9.88px;font-weight:400;color:#333;transform:scaleX(0.948)">Todas</div>
<div class="t" style="left:800.0px;top:492.36px;font-size:8.43px;line-height:8.43px;font-weight:400;color:#aaa;transform:scaleX(0.924)">Fecha desde</div>
<div class="t" style="left:800.0px;top:507.28px;font-size:9.59px;line-height:9.59px;font-weight:400;color:#444;transform:scaleX(1.001)">01/01/2010</div>
<div class="t" style="left:800.0px;top:558.94px;font-size:9.88px;line-height:9.88px;font-weight:400;color:#555;transform:scaleX(0.920)">Fecha hasta</div>
<div class="t" style="left:796.7px;top:617.39px;font-size:10.17px;line-height:10.17px;font-weight:400;color:#444;transform:scaleX(0.946)">Estructura</div>
<div class="t" style="left:800.0px;top:639.86px;font-size:8.43px;line-height:8.43px;font-weight:400;color:#aaa;transform:scaleX(0.977)">Tipo de estructura</div>
<div class="t" style="left:800.0px;top:654.24px;font-size:9.88px;line-height:9.88px;font-weight:400;color:#333;transform:scaleX(0.924)">Sucursal</div>
<div class="t" style="left:800.0px;top:685.26px;font-size:8.43px;line-height:8.43px;font-weight:400;color:#aaa;transform:scaleX(1.000)">Atributo de estructura</div>
<div class="t" style="left:800.0px;top:700.14px;font-size:9.88px;line-height:9.88px;font-weight:400;color:#333;transform:scaleX(0.919)">Bahía Blanca</div>
<div class="t" style="left:841.6px;top:737.41px;font-size:10.03px;line-height:10.03px;font-weight:700;color:#eeeeee;letter-spacing:1.03px;transform:scaleX(0.850)">APLICAR</div>
<div class="t" style="left:278.3px;top:725.64px;font-size:8.58px;line-height:8.58px;font-weight:400;color:#777;transform:scaleX(0.999)">Items por página:</div>
<div class="t" style="left:351.0px;top:724.82px;font-size:10.61px;line-height:10.61px;font-weight:400;color:#333;transform:scaleX(0.838)">15</div>
<div class="t" style="left:401.0px;top:725.74px;font-size:8.58px;line-height:8.58px;font-weight:400;color:#b5b5b5;transform:scaleX(0.909)">1 – 15 de 100</div>
</body></html>
